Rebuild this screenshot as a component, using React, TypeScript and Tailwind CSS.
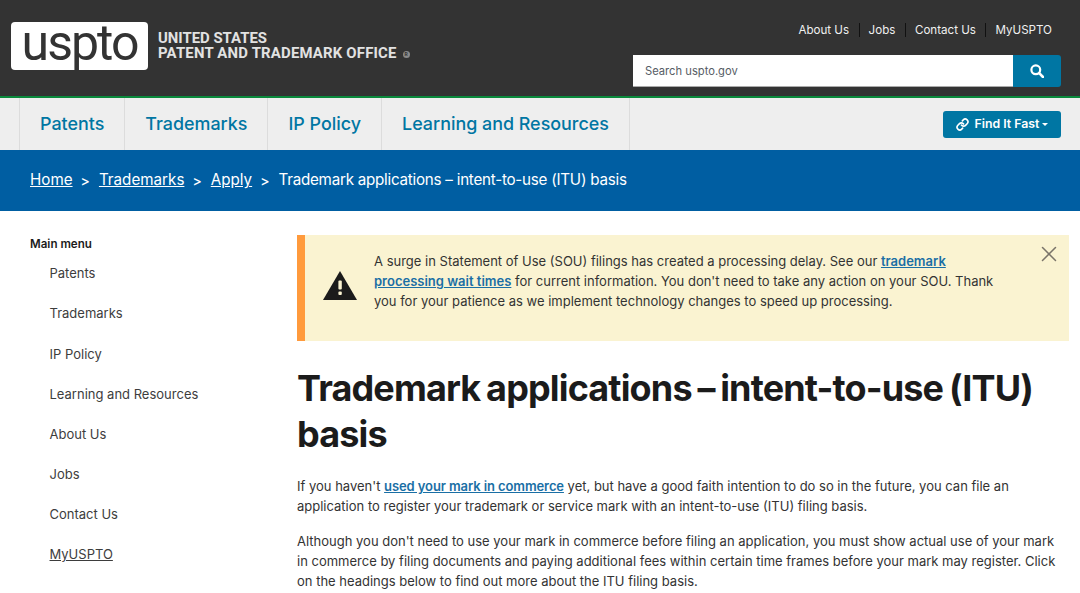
import { Link, X } from 'lucide-react';

const font = { fontFamily: 'Inter, "Liberation Sans", sans-serif' };

const navItems = ['Patents', 'Trademarks', 'IP Policy', 'Learning and Resources'];
const topLinks = ['About Us', 'Jobs', 'Contact Us', 'MyUSPTO'];
const sideItems = ['Patents', 'Trademarks', 'IP Policy', 'Learning and Resources', 'About Us', 'Jobs', 'Contact Us'];

const Logo = () => (
  <div className="flex items-start pt-[22px] pl-[11px]">
    <div className="flex h-[48px] w-[137px] items-center justify-center rounded-[4px] bg-white">
      <span className="pb-[7px] font-['Roboto'] text-[50px] leading-[48px] font-normal tracking-[-2px] text-[#333]">uspto</span>
    </div>
    <div className="mt-[9px] ml-[10px] font-['Roboto'] text-[14.9px] leading-[15px] font-bold tracking-[0.2px] text-[#e2e2e2]">
      <div className="tracking-[0px]">UNITED STATES</div>
      <div className="flex items-center">
        PATENT AND TRADEMARK OFFICE
        <span className="mt-[2px] ml-[6px] flex h-[7px] w-[7px] items-center justify-center rounded-full bg-[#8a8a8a] text-[5px] text-[#333]">R</span>
      </div>
    </div>
  </div>
);

export default function App() {
  return (
    <div style={font} className="h-[593px] w-[1080px] overflow-hidden bg-white text-[#1b1b1b]">
      <header className="flex h-[98px] justify-between border-b-2 border-[#0a8a3c] bg-[#333]">
        <Logo />
        <div className="flex w-[447px] flex-col items-end pr-[19px]">
          <div className="mt-[23px] flex h-[14px] items-center text-[11.6px] text-[#f0f0f0]">
            {topLinks.map((l, i) => (
              <span key={l} className={i < 3 ? 'mr-[9px] border-r border-[#111] pr-[9.5px] leading-[14px]' : 'mr-[9px] leading-[14px]'}>
                {l}
              </span>
            ))}
          </div>
          <div className="mt-[18px] flex h-[32px] w-[428px]">
            <div className="flex flex-1 items-center border-b border-[#aaa] bg-white pt-[1px] pl-[12px] text-[11.2px] text-[#565c65]">Search uspto.gov</div>
            <div className="flex w-[48px] items-center justify-center rounded-r-[3px] bg-[#0076a3]">
              <svg width="14" height="14" viewBox="0 0 14 14" fill="none" stroke="white">
                <circle cx="5.8" cy="5.8" r="4.4" strokeWidth="2.2" />
                <path d="M9.2 9.2 L13 13" strokeWidth="2.6" strokeLinecap="round" />
              </svg>
            </div>
          </div>
        </div>
      </header>

      <nav className="flex h-[52px] items-stretch justify-between bg-[#eee] pr-[19px] pl-[19px]">
        <div className="flex">
          {navItems.map(item => (
            <div key={item} className="flex items-center border-l border-[#dcdcdc] px-[20px] text-[17.9px] font-medium text-[#0076a3] last:border-r">
              {item}
            </div>
          ))}
        </div>
        <div className="flex items-center">
          <button className="flex h-[27px] w-[118px] items-center justify-center gap-[6px] rounded-[3px] bg-[#0076a3] text-[12.3px] font-semibold text-white">
            <Link className="h-[13px] w-[13px]" strokeWidth={3} />
            <span>Find It Fast</span>
            <span className="-ml-[3px] h-0 w-0 border-x-[3px] border-t-[3px] border-x-transparent border-t-white" />
          </button>
        </div>
      </nav>

      <div className="flex h-[61px] items-center gap-[8px] bg-[#005ea2] pl-[30px] text-[15.2px] text-white">
        <span className="underline">Home</span>
        <span className="text-[14px] leading-[14px] font-medium">&gt;</span>
        <span className="ml-[1px] underline">Trademarks</span>
        <span className="text-[14px] leading-[14px] font-medium">&gt;</span>
        <span className="ml-[1px] underline">Apply</span>
        <span className="text-[14px] leading-[14px] font-medium">&gt;</span>
        <span className="ml-[1px] tracking-[-0.25px]">Trademark applications – intent-to-use (ITU) basis</span>
      </div>

      <div className="flex">
        <aside className="w-[297px] shrink-0 pt-[25px] pl-[30px] text-[13px] text-[#3d3d3d]">
          <div className="mb-[12px] text-[11.6px] font-semibold text-[#1b1b1b]">Main menu</div>
          <div className="flex flex-col gap-[24.1px] pl-[19.5px] leading-[16px]">
            {sideItems.map(s => (
              <div key={s}>{s}</div>
            ))}
            <div className="underline">MyUSPTO</div>
          </div>
        </aside>

        <main className="w-[772px] pt-[24px]">
          <div className="relative flex h-[106px] border-l-[8px] border-[#ff9a3c] bg-[#faf3d1]">
            <div className="flex w-[69px] shrink-0 justify-center pt-[36px]">
              <svg width="34" height="29" viewBox="0 0 34 29">
                <path d="M17 0 L34 29 H0 Z" fill="#1b1b1b" />
                <rect x="15.4" y="9.5" width="3.4" height="9" rx="1" fill="#faf3d1" />
                <rect x="15.4" y="20.5" width="3.4" height="3.4" rx="1" fill="#faf3d1" />
              </svg>
            </div>
            <p className="w-[635px] pt-[16px] text-[13px] leading-[20px] text-[#333]">
              A surge in Statement of Use (SOU) filings has created a processing delay. See our{' '}
              <span className="font-semibold text-[#1a6fa5] underline">trademark processing wait times</span> for current information. You don't need to take any action on your SOU. Thank you for your patience as we implement technology changes to speed up processing.
            </p>
            <X className="absolute top-[5.5px] right-[7px] h-[26px] w-[26px] text-[#7a746a]" strokeWidth={1.4} />
          </div>

          <h1 className="mt-[24px] text-[36px] leading-[46px] font-bold tracking-[-0.85px] text-[#1b1b1b] [word-spacing:-2px]">
            Trademark applications – intent-to-use (ITU) basis
          </h1>
          <p className="mt-[19px] text-[13px] leading-[20px] text-[#333]">
            If you haven't <span className="font-semibold tracking-[-0.1px] text-[#1a6fa5] underline">used your mark in commerce</span> yet, but have a good faith intention to do so in the future, you can file an application to register your trademark or service mark with an intent-to-use (ITU) filing basis.
          </p>
          <p className="mt-[15px] max-w-[768px] text-[13px] leading-[20px] text-[#333]">
            Although you don't need to use your mark in commerce before filing an application, you must show actual use of your mark in commerce by filing documents and paying additional fees within certain time frames before your mark may register. Click on the headings below to find out more about the ITU filing basis.
          </p>
        </main>
      </div>
    </div>
  );
}
